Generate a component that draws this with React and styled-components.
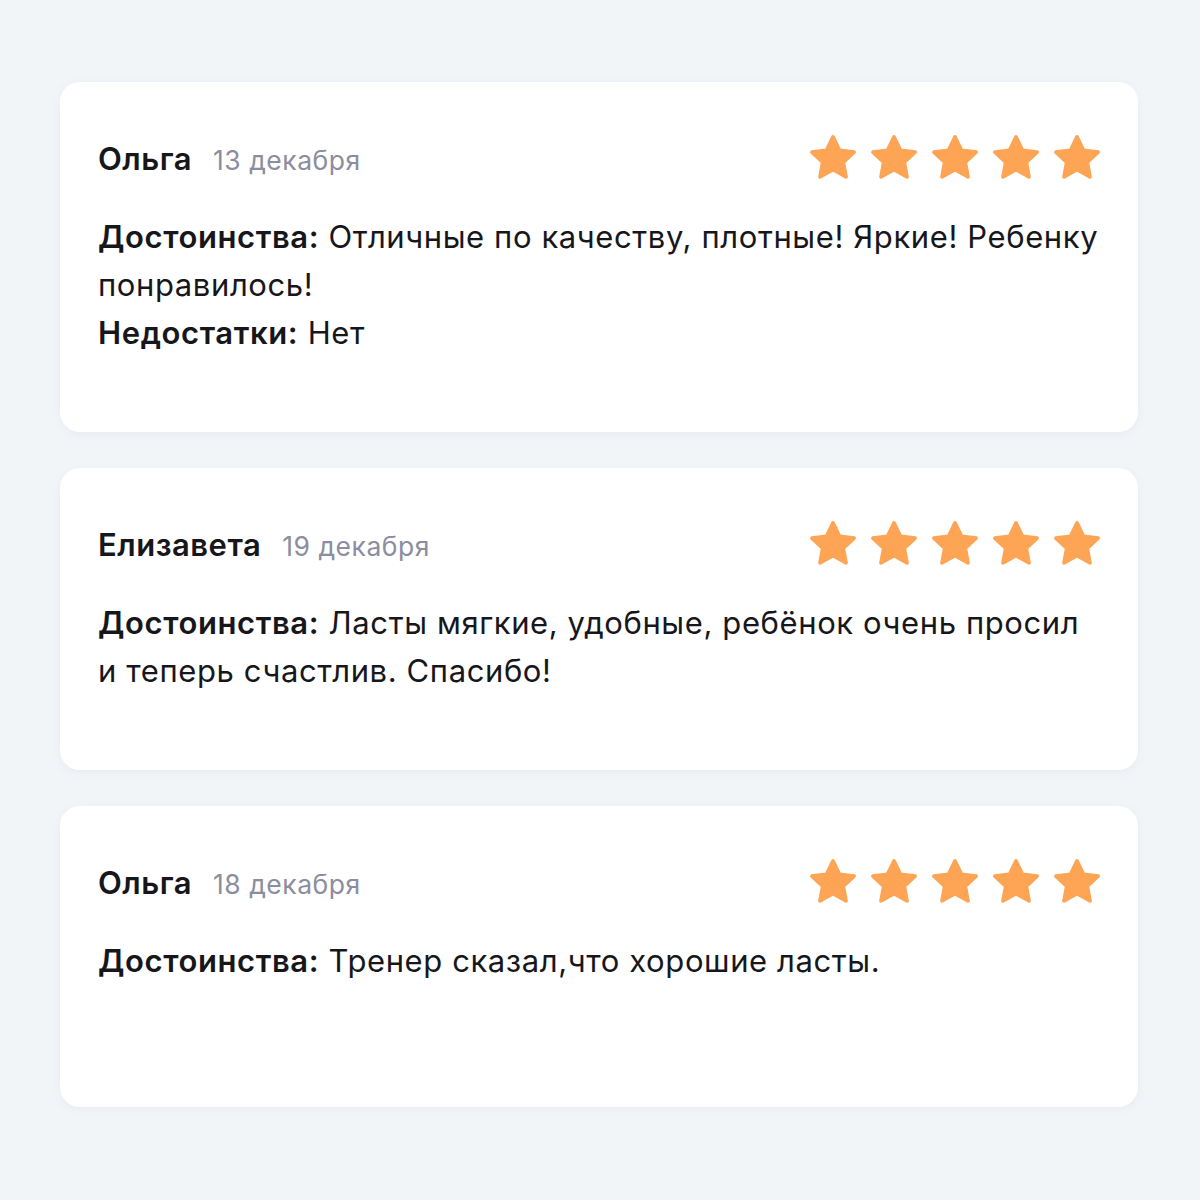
import React from "react";
import styled, { createGlobalStyle } from "styled-components";

const GlobalStyle = createGlobalStyle`
  body {
    margin: 0;
    background: #f2f5f8;
    font-family: Inter, "Noto Sans", sans-serif;
  }
`;

const Page = styled.div`
  width: 1200px;
  min-height: 1200px;
  box-sizing: border-box;
  padding: 82px 62px 60px 60px;
  display: flex;
  flex-direction: column;
  gap: 36px;
`;

const Card = styled.div`
  background: #ffffff;
  border-radius: 20px;
  min-height: 301px;
  box-sizing: border-box;
  padding: 49px 38px 75px 38px;
  box-shadow: 0 2px 10px rgba(160, 175, 190, 0.12);
`;

const Header = styled.div`
  display: flex;
  align-items: center;
  justify-content: space-between;
  height: 54px;
`;

const Who = styled.div`
  display: flex;
  align-items: baseline;
  gap: 21px;
`;

const Name = styled.span`
  font-size: 31px;
  font-weight: 600;
  letter-spacing: 0.5px;
  color: #17171b;
`;

const DateText = styled.span`
  font-size: 26.5px;
  letter-spacing: 0.5px;
  color: #8c8d9e;
`;

const Stars = styled.div`
  display: flex;
  gap: 7px;
  margin-right: -4px;
`;

const Body = styled.div`
  margin-top: 28px;
  font-size: 31px;
  line-height: 48px;
  letter-spacing: 0.6px;
  color: #17171b;
`;

const Line = styled.p`
  margin: 0;
`;

const Label = styled.b`
  font-weight: 600;
`;

const Star = () => (
  <svg width="54" height="54" viewBox="0 0 24 24">
    <path
      d="M12 2.6l2.9 6 6.5.8-4.8 4.5 1.2 6.5L12 17.2l-5.8 3.2 1.2-6.5L2.6 9.4l6.5-.8z"
      fill="#fda455"
      stroke="#fda455"
      strokeWidth="1.6"
      strokeLinejoin="round"
    />
  </svg>
);

const reviews = [
  {
    name: "Ольга",
    date: "13 декабря",
    lines: [
      ["Достоинства:", "Отличные по качеству, плотные! Яркие! Ребенку понравилось!"],
      ["Недостатки:", "Нет"],
    ],
  },
  {
    name: "Елизавета",
    date: "19 декабря",
    lines: [
      ["Достоинства:", "Ласты мягкие, удобные, ребёнок очень просил и теперь счастлив. Спасибо!"],
    ],
  },
  {
    name: "Ольга",
    date: "18 декабря",
    lines: [["Достоинства:", "Тренер сказал,что хорошие ласты."]],
  },
];

const App = () => (
  <>
    <GlobalStyle />
    <Page>
      {reviews.map((r, i) => (
        <Card key={i}>
          <Header>
            <Who>
              <Name>{r.name}</Name>
              <DateText>{r.date}</DateText>
            </Who>
            <Stars>
              {[0, 1, 2, 3, 4].map((s) => (
                <Star key={s} />
              ))}
            </Stars>
          </Header>
          <Body>
            {r.lines.map(([label, text], j) => (
              <Line key={j}>
                <Label>{label}</Label> {text}
              </Line>
            ))}
          </Body>
        </Card>
      ))}
    </Page>
  </>
);

export default App;
